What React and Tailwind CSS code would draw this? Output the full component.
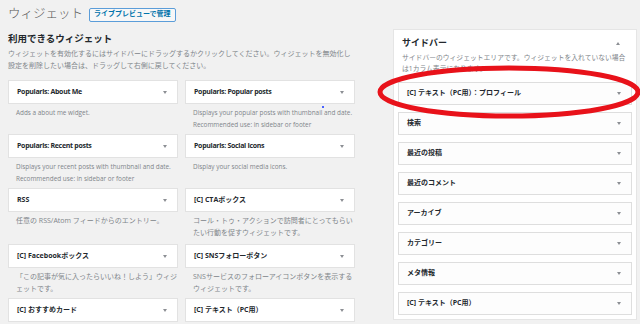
import React from "react";

const LEFT_WIDGETS = [
  [
    { title: "Popularis: About Me", latin: true, desc: ["Adds a about me widget."] },
    {
      title: "Popularis: Popular posts",
      latin: true,
      desc: ["Displays your popular posts with thumbnail and date.", "Recommended use: in sidebar or footer"],
    },
  ],
  [
    {
      title: "Popularis: Recent posts",
      latin: true,
      desc: ["Displays your recent posts with thumbnail and date.", "Recommended use: in sidebar or footer"],
    },
    { title: "Popularis: Social Icons", latin: true, desc: ["Display your social media icons."] },
  ],
  [
    { title: "RSS", desc: ["任意の RSS/Atom フィードからのエントリー。"] },
    {
      title: "[C] CTAボックス",
      desc: ["コール・トゥ・アクションで訪問者にとってもらい", "たい行動を促すウィジェットです。"],
    },
  ],
  [
    {
      title: "[C] Facebookボックス",
      desc: ["「この記事が気に入ったらいいね！しよう」ウィジ", "ェットです。"],
    },
    {
      title: "[C] SNSフォローボタン",
      desc: ["SNSサービスのフォローアイコンボタンを表示する", "ウィジェットです。"],
    },
  ],
  [
    { title: "[C] おすすめカード", desc: [] },
    { title: "[C] テキスト（PC用）", desc: [] },
  ],
];

// space under each box, so the rows land where the screenshot has them
const DESC_HEIGHTS = ["h-[30px]", "h-[30px]", "h-[32px]", "h-[30px]", "h-[30px]"];

const SIDEBAR_ITEMS = [
  "[C] テキスト（PC用）：プロフィール",
  "検索",
  "最近の投稿",
  "最近のコメント",
  "アーカイブ",
  "カテゴリー",
  "メタ情報",
  "[C] テキスト（PC用）",
];

const Arrow = ({ up }) => (
  <span
    className={
      up
        ? "w-0 h-0 border-x-[2.5px] border-x-transparent border-b-[3px] border-b-[#8c8f94]"
        : "w-0 h-0 border-x-[2.5px] border-x-transparent border-t-[3px] border-t-[#8c8f94]"
    }
  />
);

const WidgetCell = ({ widget, descHeight }) => (
  <div>
    <div className="h-[24px] flex items-center justify-between pl-[8px] pr-[10px] bg-white border border-[#e2e2e2]">
      <span className={`text-[7px] font-bold text-[#23282d] ${widget.latin ? "tracking-[-0.3px]" : ""}`}>
        {widget.title}
      </span>
      <Arrow />
    </div>
    <div
      className={`${descHeight} pt-[3px] pl-[8px] leading-[12px] text-[#80858a] ${
        widget.latin ? "text-[6.4px]" : "text-[7px]"
      }`}
    >
      {widget.desc.map((line, i) => (
        <div key={i} className="whitespace-nowrap">
          {line}
        </div>
      ))}
    </div>
  </div>
);

export default function App() {
  return (
    <div className="relative w-[640px] h-[324px] overflow-hidden bg-[#f1f1f1] font-['Open_Sans','Noto_Sans_CJK_JP',sans-serif]">
      {/* HEADER */}
      <div className="h-[29px] flex items-center gap-[6px] pl-[8px]">
        <h1 className="text-[12.5px] font-light text-[#555] leading-none">ウィジェット</h1>
        <button className="h-[14px] px-[4px] flex items-center border border-[#5b9dd9] bg-[#f7f7f7] rounded-[2px] text-[7px] font-bold text-[#0073aa]">
          ライブプレビューで管理
        </button>
      </div>

      <div className="flex pl-[8px]">
        {/* AVAILABLE WIDGETS */}
        <div className="w-[347px]">
          <h2 className="mt-[3px] text-[9.5px] leading-[14px] font-bold text-[#23282d]">利用できるウィジェット</h2>
          <div className="mt-[2px] text-[7px] leading-[12px] text-[#80858a] whitespace-nowrap">
            <div>ウィジェットを有効化するにはサイドバーにドラッグするかクリックしてください。ウィジェットを無効化し</div>
            <div>設定を削除したい場合は、ドラッグして右側に戻してください。</div>
          </div>

          <div className="mt-[8px] grid grid-cols-[170px_170px] gap-x-[7px]">
            {LEFT_WIDGETS.map((row, r) =>
              row.map((w, c) => <WidgetCell key={`${r}-${c}`} widget={w} descHeight={DESC_HEIGHTS[r]} />)
            )}
          </div>
        </div>

        {/* SIDEBAR */}
        <div className="ml-[38px] w-[244px] h-[291px] bg-white border border-[#e5e5e5] px-[4px] pt-[6px]">
          <div className="flex items-center justify-between pl-[4px] pr-[12px]">
            <h2 className="text-[9px] leading-[14px] font-bold text-[#23282d]">サイドバー</h2>
            <Arrow up />
          </div>
          <div className="mt-[2px] pl-[4px] text-[6.8px] leading-[11px] text-[#80858a] whitespace-nowrap">
            <div>サイドバーのウィジェットエリアです。ウィジェットを入れていない場合</div>
            <div>は1カラム表示になります。</div>
          </div>

          <div className="mt-[8px] flex flex-col gap-[7px]">
            {SIDEBAR_ITEMS.map((item, i) => (
              <div
                key={i}
                className="h-[23px] flex items-center justify-between pl-[8px] pr-[10px] bg-[#fdfdfd] border border-[#dedede]"
              >
                <span className="text-[7px] font-bold text-[#23282d]">{item}</span>
                <Arrow />
              </div>
            ))}
          </div>
        </div>
      </div>

      {/* red annotation + stray cursor dot */}
      <svg className="absolute inset-0 pointer-events-none" width="640" height="324">
        <ellipse cx="509" cy="92" rx="129" ry="24" fill="none" stroke="#e8121a" strokeWidth="5" />
      </svg>
      <span className="absolute left-[322px] top-[106px] w-[2px] h-[2px] bg-[#4a63ff]" />
    </div>
  );
}
